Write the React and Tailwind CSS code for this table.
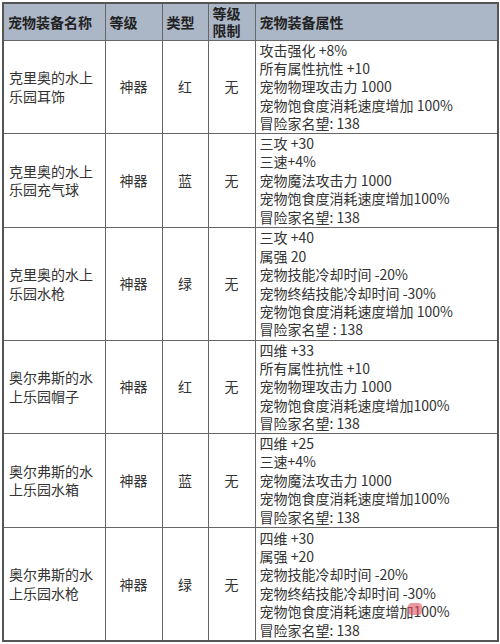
const rows = [
  {
    name: "克里奥的水上乐园耳饰",
    type: "红",
    h: "h-[92px]",
    attrs: ["攻击强化 +8%", "所有属性抗性 +10", "宠物物理攻击力 1000", "宠物饱食度消耗速度增加 100%", "冒险家名望: 138"],
  },
  {
    name: "克里奥的水上乐园充气球",
    type: "蓝",
    h: "h-[94px]",
    attrs: ["三攻 +30", "三速+4%", "宠物魔法攻击力 1000", "宠物饱食度消耗速度增加100%", "冒险家名望: 138"],
  },
  {
    name: "克里奥的水上乐园水枪",
    type: "绿",
    h: "h-[113px]",
    attrs: ["三攻 +40", "属强 20", "宠物技能冷却时间 -20%", "宠物终结技能冷却时间 -30%", "宠物饱食度消耗速度增加 100%", "冒险家名望 : 138"],
  },
  {
    name: "奥尔弗斯的水上乐园帽子",
    type: "红",
    h: "h-[92px]",
    attrs: ["四维 +33", "所有属性抗性 +10", "宠物物理攻击力 1000", "宠物饱食度消耗速度增加100%", "冒险家名望: 138"],
  },
  {
    name: "奥尔弗斯的水上乐园水箱",
    type: "蓝",
    h: "h-[94px]",
    attrs: ["四维 +25", "三速+4%", "宠物魔法攻击力 1000", "宠物饱食度消耗速度增加100%", "冒险家名望: 138"],
  },
  {
    name: "奥尔弗斯的水上乐园水枪",
    type: "绿",
    h: "h-[114px]",
    attrs: ["四维 +30", "属强 +20", "宠物技能冷却时间 -20%", "宠物终结技能冷却时间 -30%", "宠物饱食度消耗速度增加100%", "冒险家名望: 138"],
    mark: true,
  },
];

export default function App() {
  return (
    <div
      className="w-[500px] h-[644px] bg-white pt-[2px] pl-[2px] text-[#333]"
      style={{ fontFamily: '"Noto Sans CJK SC", sans-serif' }}
    >
      <table className="table-fixed border-collapse w-[495px] border-2 border-[#555] text-[14px] leading-[18.4px]">
        <colgroup>
          <col className="w-[102px]" />
          <col className="w-[57px]" />
          <col className="w-[46px]" />
          <col className="w-[47px]" />
          <col className="w-[243px]" />
        </colgroup>
        <thead>
          <tr className="h-[37px] bg-[#abb6c7] text-[#222]">
            <th className="border border-[#666] px-[4px] py-0 text-left font-bold">宠物装备名称</th>
            <th className="border border-[#666] px-[4px] py-0 text-left font-bold">等级</th>
            <th className="border border-[#666] px-[4px] py-0 text-left font-bold">类型</th>
            <th className="border border-[#666] px-[4px] py-0 text-left font-bold leading-[17px]">
              等级
              <br />
              限制
            </th>
            <th className="border border-[#666] px-[4px] py-0 text-left font-bold">宠物装备属性</th>
          </tr>
        </thead>
        <tbody>
          {rows.map((r) => (
            <tr key={r.name} className={r.h}>
              <td className="border border-[#666] px-[5px] py-0 align-middle">{r.name}</td>
              <td className="border border-[#666] py-0 text-center align-middle">神器</td>
              <td className="border border-[#666] py-0 text-center align-middle">{r.type}</td>
              <td className="border border-[#666] py-0 text-center align-middle">无</td>
              <td className="border border-[#666] px-[4px] py-0 align-middle">
                <div className="relative">
                  {r.attrs.map((a) => (
                    <div key={a} className="whitespace-nowrap">
                      {a}
                    </div>
                  ))}
                  {r.mark && (
                    <div className="absolute left-[148px] top-[74px] w-[14px] h-[12px] rounded-sm bg-[#e05060] opacity-60" />
                  )}
                </div>
              </td>
            </tr>
          ))}
        </tbody>
      </table>
    </div>
  );
}
